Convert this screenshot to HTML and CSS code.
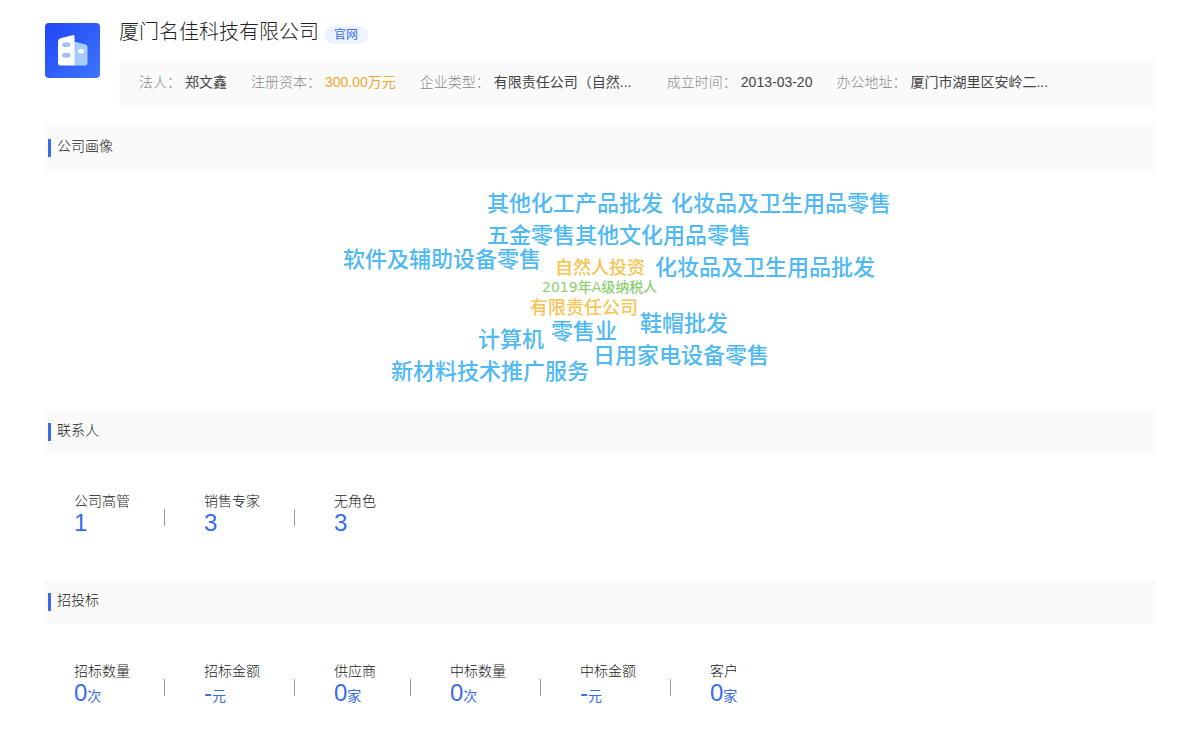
FILE: index.html
```html
<!DOCTYPE html>
<html lang="zh-CN">
<head>
<meta charset="utf-8">
<meta name="viewport" content="width=device-width, initial-scale=1">
<title>厦门名佳科技有限公司</title>
<link rel="stylesheet" href="styles.css">
</head>
<body>
<main class="page">
  <header class="company">
    <svg class="logo" viewBox="0 0 55 55" aria-hidden="true">
      <defs>
        <linearGradient id="logo-bg" x1="0" y1="0" x2="1" y2="1">
          <stop offset="0" stop-color="#2145f8"/>
          <stop offset="1" stop-color="#3d76fb"/>
        </linearGradient>
      </defs>
      <rect width="55" height="55" rx="4" fill="url(#logo-bg)"/>
      <path d="M29 18.500L40.500 21.500Q42.500 22 42.500 24V40Q42.500 42.500 40 42.500H29Z" fill="#a6cbfd"/>
      <path d="M13 18.500Q13 16 15.500 15.200L27.500 12.200Q29.500 11.700 29.500 13.500V42.500H15.500Q13 42.500 13 40Z" fill="#fff"/>
      <rect x="17" y="19.500" width="8.500" height="4.500" rx="2.250" fill="#9cc0f6"/>
      <rect x="17" y="30" width="8.500" height="4.500" rx="2.250" fill="#9cc0f6"/>
      <rect x="33" y="26" width="6" height="4.500" rx="2.250" fill="#fff"/>
    </svg>
    <div class="company-main">
      <div class="company-title">
        <h1 class="company-name">厦门名佳科技有限公司</h1>
        <a class="site-link" href="#">官网</a>
      </div>
      <dl class="facts">
        <div class="fact"><dt>法人：</dt><dd>郑文鑫</dd></div>
        <div class="fact"><dt>注册资本：</dt><dd class="amount">300.00万元</dd></div>
        <div class="fact"><dt>企业类型：</dt><dd class="long">有限责任公司（自然...</dd></div>
        <div class="fact"><dt>成立时间：</dt><dd>2013-03-20</dd></div>
        <div class="fact"><dt>办公地址：</dt><dd class="long">厦门市湖里区安岭二...</dd></div>
      </dl>
    </div>
  </header>

  <section>
    <h2 class="section-title">公司画像</h2>
    <div class="cloud">
      <div class="cloud-canvas">
        <span class="word w1">其他化工产品批发</span>
        <span class="word w2">化妆品及卫生用品零售</span>
        <span class="word w3">五金零售其他文化用品零售</span>
        <span class="word w4">软件及辅助设备零售</span>
        <span class="word mid w5">自然人投资</span>
        <span class="word w6">化妆品及卫生用品批发</span>
        <span class="word small w7">2019年A级纳税人</span>
        <span class="word mid w8">有限责任公司</span>
        <span class="word w9">鞋帽批发</span>
        <span class="word w10">零售业</span>
        <span class="word w11">计算机</span>
        <span class="word w12">日用家电设备零售</span>
        <span class="word w13">新材料技术推广服务</span>
      </div>
    </div>
  </section>

  <section>
    <h2 class="section-title">联系人</h2>
    <dl class="stats">
      <div class="stat"><dt>公司高管</dt><dd>1</dd></div>
      <div class="stat"><dt>销售专家</dt><dd>3</dd></div>
      <div class="stat"><dt>无角色</dt><dd>3</dd></div>
    </dl>
  </section>

  <section>
    <h2 class="section-title">招投标</h2>
    <dl class="stats">
      <div class="stat"><dt>招标数量</dt><dd>0<small>次</small></dd></div>
      <div class="stat"><dt>招标金额</dt><dd>-<small>元</small></dd></div>
      <div class="stat"><dt>供应商</dt><dd>0<small>家</small></dd></div>
      <div class="stat"><dt>中标数量</dt><dd>0<small>次</small></dd></div>
      <div class="stat"><dt>中标金额</dt><dd>-<small>元</small></dd></div>
      <div class="stat"><dt>客户</dt><dd>0<small>家</small></dd></div>
    </dl>
  </section>
</main>
</body>
</html>
```
FILE: styles.css
```css
* {
  box-sizing: border-box;
}

body,
h1,
h2,
dl,
dd {
  margin: 0;
}

body {
  background: #fff;
  color: #222;
  font: 300 14px/20px "Liberation Sans", "Noto Sans CJK SC", sans-serif;
}

.page {
  padding: 18px 44px 0;
}

.company {
  display: flex;
  gap: 19px;
  margin-bottom: 20px;
}

.logo {
  flex: none;
  width: 55px;
  height: 55px;
  margin: 5px 0 0 1px;
}

.company-main {
  flex: 1;
  min-width: 0;
}

.company-title {
  display: flex;
  align-items: flex-start;
  gap: 5px;
  height: 44px;
}

.company-name {
  font-size: 20px;
  font-weight: 300;
  line-height: 28px;
}

.site-link {
  margin-top: 8px;
  padding: 0 10px;
  border-radius: 9px;
  background: #ecf3fe;
  color: #3a6df0;
  font-size: 12px;
  font-weight: 400;
  line-height: 18px;
  text-decoration: none;
}

.facts {
  display: flex;
  gap: 24px;
  padding: 10px 20px 14px;
  background: #fafafa;
  white-space: nowrap;
}

.fact {
  display: flex;
  gap: 4px;
}

.fact dt {
  color: #888;
}

.fact dd {
  color: #444;
  font-weight: 400;
}

.fact .long {
  width: 149px;
}

.fact .amount {
  color: #f0a830;
}

.section-title {
  display: flex;
  gap: 6px;
  padding: 10px 4px 13px;
  background: #fafafa;
  font-size: 14px;
  font-weight: 300;
}

.section-title::before {
  content: "";
  width: 3px;
  height: 18px;
  margin-top: 3px;
  background: #3a6bea;
}

.cloud {
  display: flex;
  justify-content: center;
  height: 240px;
}

.cloud-canvas {
  position: relative;
  width: 560px;
}

.word {
  position: absolute;
  color: #4fb9f5;
  font: 500 22px/32px "DejaVu Sans", "Noto Sans CJK SC", sans-serif;
  white-space: nowrap;
}

.word.mid {
  color: #f8c555;
  font-size: 18px;
}

.word.small {
  color: #8fcf74;
  font-size: 14px;
}

.w1 { left: 167px; top: 18px; }
.w2 { left: 351px; top: 18px; }
.w3 { left: 167px; top: 50px; }
.w4 { left: 23px; top: 74px; }
.w5 { left: 235px; top: 82px; }
.w6 { left: 335px; top: 82px; }
.w7 { left: 222px; top: 101px; }
.w8 { left: 210px; top: 122px; }
.w9 { left: 320px; top: 138px; }
.w10 { left: 231px; top: 146px; }
.w11 { left: 158px; top: 154px; }
.w12 { left: 273px; top: 170px; }
.w13 { left: 71px; top: 186px; }

.stats {
  display: flex;
  padding: 36px 30px 46px;
}

.stat {
  display: grid;
  grid-template-columns: auto auto;
}

.stat dt {
  grid-column: 1;
  line-height: 22px;
}

.stat dd {
  grid-column: 1;
  color: #3a6bea;
  font-size: 24px;
  font-weight: 400;
  line-height: 22px;
}

.stat small {
  font-size: 14px;
  font-weight: 400;
}

.stat:not(:last-child)::after {
  content: "";
  grid-column: 2;
  grid-row: 1 / 3;
  width: 1px;
  height: 17px;
  margin: 19px 39px 0 34px;
  background: #999;
}
```
